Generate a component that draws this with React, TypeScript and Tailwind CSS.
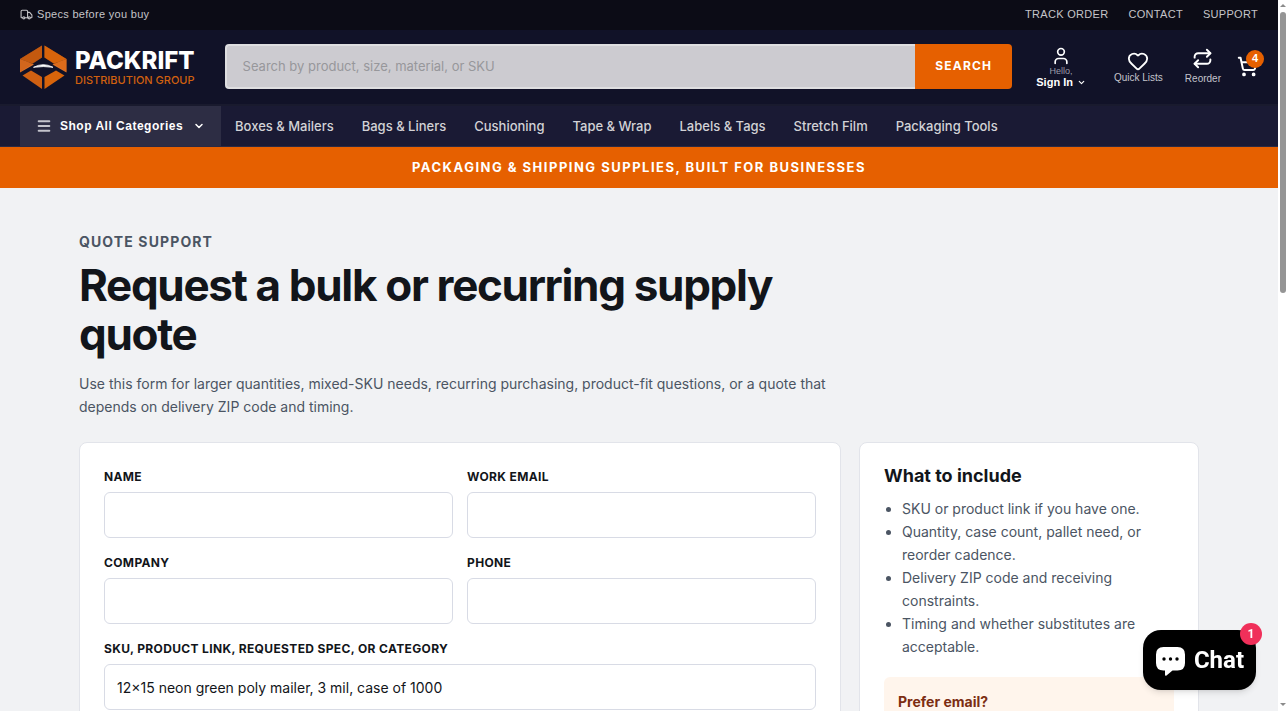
import { ChevronDown, Heart, Menu, Repeat, ShoppingCart, Truck, User } from "lucide-react";
import { useState } from "react";

const topLinks = ["Track Order", "Contact", "Support"];

const categories = [
  "Boxes & Mailers",
  "Bags & Liners",
  "Cushioning",
  "Tape & Wrap",
  "Labels & Tags",
  "Stretch Film",
  "Packaging Tools",
];

const fields = [
  { id: "name", label: "Name", type: "text" },
  { id: "email", label: "Work email", type: "email" },
  { id: "company", label: "Company", type: "text" },
  { id: "phone", label: "Phone", type: "tel" },
];

const includeItems = [
  "SKU or product link if you have one.",
  "Quantity, case count, pallet need, or reorder cadence.",
  "Delivery ZIP code and receiving constraints.",
  "Timing and whether substitutes are acceptable.",
];

function Logo() {
  return (
    <a href="#" className="flex shrink-0 items-center gap-2">
      <svg width="47" height="45" viewBox="0 0 47 45" className="mt-0.5" aria-hidden="true">
        <path d="M22 0.5V12.5L12.5 18.5L0 14Z" fill="#c4590f" />
        <path d="M24.500 0.5V12.5L34 18.5L46.500 14Z" fill="#d8640b" />
        <path d="M0 14L7 16.500L14 19.500L0 27.500Z" fill="#e0732a" />
        <path d="M46.500 14L39.500 16.500L32.500 19.500L46.500 27.500Z" fill="#e0732a" />
        <path d="M22 0.5V12.5L12.5 19L0 27V14Z" fill="#c4590f" fillOpacity="0.5" />
        <path d="M24.500 0.5V12.5L34 19L46.500 27V14Z" fill="#d8640b" fillOpacity="0.5" />
        <path d="M2.500 30.500L11 25.500L22 32V44Z" fill="#cf6012" />
        <path d="M44.500 30.500L36 25.500L24.500 32V44Z" fill="#d8640b" />
        <path d="M13.500 22.300Q23.500 17 33 22.300Q23.500 20.800 13.500 22.300Z" fill="#fff" stroke="#fff" strokeWidth="0.8" />
      </svg>
      <span className="flex flex-col pt-1.5">
        <span className="text-2xl leading-[22px] font-extrabold text-white">PACKRIFT</span>
        <span className="text-[11px] leading-4 font-medium text-[#d0600f]">DISTRIBUTION GROUP</span>
      </span>
    </a>
  );
}

function TopBar() {
  return (
    <div className="flex h-[30px] items-center justify-between bg-[#0c0c16] px-5 pb-0.5 font-['Liberation_Sans',sans-serif] text-[11px] text-[#c4c4c8]">
      <span className="flex items-center gap-1 tracking-[0.3px]">
        <Truck size={13} strokeWidth={2} />
        Specs before you buy
      </span>
      <nav className="flex gap-5 tracking-[0.3px] uppercase">
        {topLinks.map((link) => (
          <a key={link} href="#">
            {link}
          </a>
        ))}
      </nav>
    </div>
  );
}

function Header() {
  return (
    <header className="flex h-[74px] items-center bg-[#111228] px-5 pb-0.5">
      <Logo />
      <form className="ml-[30px] flex h-[45px] flex-1" onSubmit={(e) => e.preventDefault()}>
        <input
          type="search"
          aria-label="Search"
          placeholder="Search by product, size, material, or SKU"
          className="min-w-0 flex-1 rounded-l border-2 border-r-0 border-[#dedee0] bg-[#cccbd0] px-4 pt-0.5 text-[13px] text-[#111228] placeholder:text-[#97979b]"
        />
        <button
          type="submit"
          className="rounded-r bg-[#e66000] px-5 text-xs font-bold tracking-widest text-white"
        >
          SEARCH
        </button>
      </form>
      <div className="ml-6 flex items-center font-['Liberation_Sans',sans-serif] text-[10px] text-[#c4c4cc]">
        <a href="#" className="flex flex-col items-center pt-0.5">
          <User size={20} strokeWidth={2} className="text-white" />
          <span className="text-[9px] leading-[10px] text-[#9c9ca8]">Hello,</span>
          <span className="flex items-center gap-1 text-[11px] leading-3 font-bold text-white">
            Sign In
            <ChevronDown size={9} strokeWidth={3} />
          </span>
        </a>
        <a href="#" className="ml-7 flex flex-col items-center pt-0.5">
          <Heart size={22} strokeWidth={2} className="text-white" />
          <span className="leading-3">Quick Lists</span>
        </a>
        <a href="#" className="ml-[22px] flex flex-col items-center gap-1">
          <Repeat size={21} strokeWidth={2.2} className="text-white" />
          <span className="leading-3">Reorder</span>
        </a>
        <a href="#" aria-label="Cart" className="relative ml-4 text-white">
          <ShoppingCart size={21} strokeWidth={2.3} />
          <span className="absolute -top-1.5 -right-1.5 flex size-[18px] items-center justify-center rounded-full bg-[#e66000] text-[11px] font-bold">
            4
          </span>
        </a>
      </div>
    </header>
  );
}

function CategoryNav() {
  return (
    <nav className="flex h-[43px] border-t-2 border-b border-t-[#191a2e] border-b-[#2a2a45] bg-[#1a1a34]">
      <button className="ml-5 flex items-center bg-[#2d2d44] px-4 font-['Liberation_Sans',sans-serif] text-xs font-bold tracking-[0.5px] text-white">
        <Menu size={16} strokeWidth={3} className="mr-2 text-[#c4c4cc]" />
        Shop All Categories
        <ChevronDown size={12} strokeWidth={3} className="ml-2.5" />
      </button>
      <div className="flex items-center pt-0.5">
        {categories.map((category) => (
          <a key={category} href="#" className="px-3.5 text-[13px] font-medium text-[#d2d2d6]">
            {category}
          </a>
        ))}
      </div>
    </nav>
  );
}

function QuoteForm() {
  const [spec, setSpec] = useState("12×15 neon green poly mailer, 3 mil, case of 1000");

  return (
    <form className="grid flex-1 grid-cols-2 content-start gap-x-3.5 gap-y-[15px] rounded-lg border border-[#e2e4ea] bg-white p-6 pb-24">
      {fields.map((field) => (
        <div key={field.id} className="flex flex-col gap-1.5">
          <label htmlFor={field.id} className="text-xs leading-[19px] font-bold tracking-[0.03em] uppercase">
            {field.label}
          </label>
          <input
            id={field.id}
            type={field.type}
            className="h-[46px] w-full rounded-md border border-[#d8dbe5] px-3 text-sm"
          />
        </div>
      ))}
      <div className="col-span-2 flex flex-col gap-1.5">
        <label htmlFor="spec" className="text-xs leading-[19px] font-bold tracking-[0.03em] uppercase">
          SKU, product link, requested spec, or category
        </label>
        <input
          id="spec"
          type="text"
          value={spec}
          onChange={(e) => setSpec(e.target.value)}
          className="h-[46px] w-full rounded-md border border-[#d8dbe5] px-3 text-sm"
        />
      </div>
    </form>
  );
}

function IncludePanel() {
  return (
    <aside className="w-[340px] shrink-0 rounded-lg border border-[#e2e4ea] bg-white p-6">
      <h2 className="text-lg leading-[18px] font-bold">What to include</h2>
      <ul className="mt-3 list-disc pl-[18px] text-sm leading-[23px] text-[#4b5563]">
        {includeItems.map((item) => (
          <li key={item}>{item}</li>
        ))}
      </ul>
      <div className="mt-[19px] rounded-md bg-[#fff5ec] px-3.5 pt-[13px] pb-24 text-sm text-[#7c2d12]">
        <strong className="leading-[23px]">Prefer email?</strong>
      </div>
    </aside>
  );
}

function ChatButton() {
  return (
    <button className="fixed right-8 bottom-[21px] flex h-[60px] items-center gap-2 rounded-[18px] bg-black px-3 font-[Roboto,sans-serif] text-2xl font-bold text-white shadow-md">
      <svg width="31" height="30" viewBox="0 0 30 30" className="mt-1" aria-hidden="true">
        <path
          d="M8 0H22Q29.500 0 29.500 7.500V16Q29.500 23.500 22 23.500H17L11 28.500Q9.500 29.500 9.500 27.500V23.500H8Q0.500 23.500 0.500 16V7.500Q0.500 0 8 0Z"
          fill="#fff"
        />
        <circle cx="8.500" cy="12" r="1.700" />
        <circle cx="15" cy="12" r="1.700" />
        <circle cx="21.500" cy="12" r="1.700" />
      </svg>
      Chat
      <span className="absolute -top-[7px] -right-1.5 flex size-[22px] items-center justify-center rounded-full bg-[#f0305a] text-xs">
        1
      </span>
    </button>
  );
}

function Scrollbar() {
  return (
    <div aria-hidden="true" className="flex w-2.5 shrink-0 flex-col items-center bg-white py-1">
      <svg width="6" height="4" viewBox="0 0 6 4">
        <path d="M0 3L3 0L6 3Z" fill="#8b8b8b" />
      </svg>
      <div className="mt-1 h-2/5 w-1.5 rounded-full bg-[#959595]" />
      <svg width="6" height="4" viewBox="0 0 6 4" className="mt-auto">
        <path d="M0 0L3 3L6 0Z" fill="#8b8b8b" />
      </svg>
    </div>
  );
}

export default function App() {
  return (
    <div className="flex h-screen overflow-hidden bg-[#f1f2f4] font-[Inter,sans-serif] text-[#12151a]">
      <div className="min-w-0 flex-1">
        <TopBar />
        <Header />
        <CategoryNav />
        <p className="bg-[#e66000] text-center text-[13px] leading-[41px] font-bold tracking-[1.5px] text-white">
          PACKAGING &amp; SHIPPING SUPPLIES, BUILT FOR BUSINESSES
        </p>
        <main className="mx-auto max-w-[1120px] pt-11">
          <div className="max-w-[760px]">
            <p className="text-sm font-bold tracking-[0.08em] text-[#4b5563] uppercase">Quote support</p>
            <h1 className="mt-[9px] text-[44px] leading-[49px] font-bold tracking-[-0.03em]">
              Request a bulk or recurring supply quote
            </h1>
            <p className="mt-[13px] text-sm leading-[23px] text-[#4b5563]">
              Use this form for larger quantities, mixed-SKU needs, recurring purchasing, product-fit
              questions, or a quote that depends on delivery ZIP code and timing.
            </p>
          </div>
          <div className="mt-6 flex gap-[18px]">
            <QuoteForm />
            <IncludePanel />
          </div>
        </main>
      </div>
      <Scrollbar />
      <ChatButton />
    </div>
  );
}
